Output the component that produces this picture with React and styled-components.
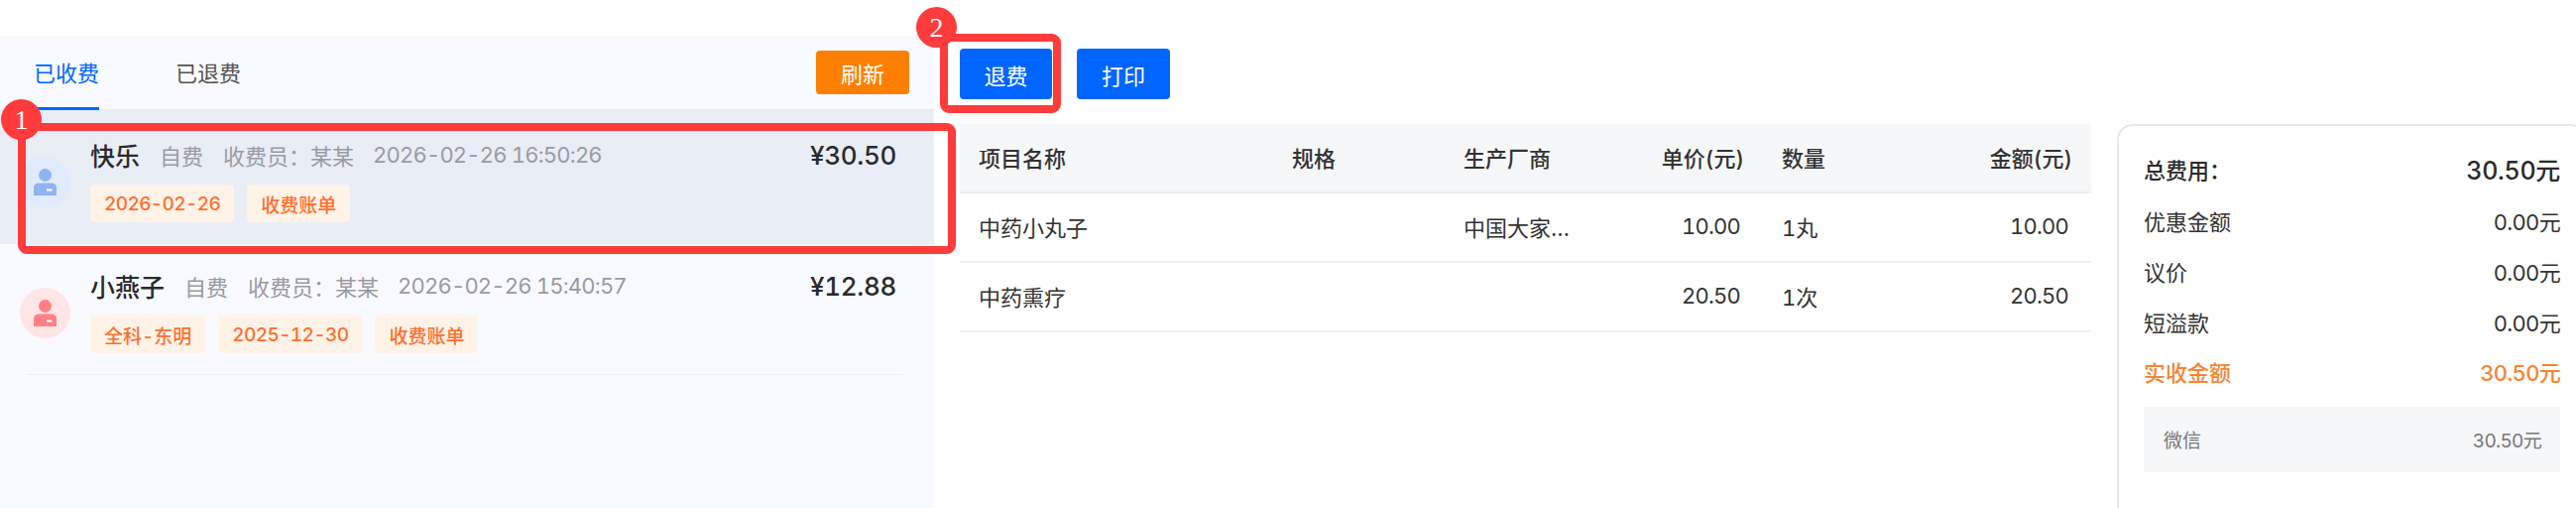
import styled, { createGlobalStyle } from 'styled-components';

const GlobalStyle = createGlobalStyle`
  html, body {
    margin: 0;
    padding: 0;
    background: #fff;
    font-family: Inter, "Noto Sans CJK SC", sans-serif;
    font-variant-numeric: tabular-nums;
    color: #333;
  }
`;

const Page = styled.div`
  position: relative;
  display: flex;
  width: 2598px;
  height: 512px;
  overflow: hidden;
`;

const LeftPanel = styled.section`
  flex: 0 0 942px;
  margin-top: 36px;
  background: #f9faff;
`;

const TabBar = styled.div`
  display: flex;
  align-items: stretch;
  height: 75px;
  padding-left: 34px;
  padding-right: 25px;
  gap: 77px;
  box-sizing: border-box;
  border-bottom: 1px solid #e8ebf2;
`;

const Tab = styled.div`
  display: flex;
  align-items: center;
  font-size: 22px;
  color: ${(p) => (p.$active ? '#0066ff' : '#555')};
  border-bottom: 3px solid ${(p) => (p.$active ? '#0066ff' : 'transparent')};
  margin-bottom: -1px;
`;

const Button = styled.button`
  border: none;
  border-radius: 4px;
  background: ${(p) => p.$bg || '#0066ff'};
  color: #fff;
  font-family: inherit;
  font-size: 22px;
  width: ${(p) => p.$w || 94}px;
  height: ${(p) => p.$h || 51}px;
  padding: 0;
`;

const RefreshButton = styled(Button)`
  margin-left: auto;
  align-self: center;
`;

const Row = styled.div`
  position: relative;
  display: flex;
  align-items: center;
  gap: 20px;
  padding: ${(p) => (p.$active ? 31 : 28)}px 38px 22px 20px;
  background: ${(p) => (p.$active ? '#e9edf5' : 'transparent')};

  &::after {
    content: '';
    position: absolute;
    left: 27px;
    right: 31px;
    bottom: 0;
    height: 1px;
    background: ${(p) => (p.$active ? 'transparent' : '#eef0f5')};
  }
`;

const Avatar = styled.div`
  flex: 0 0 51px;
  height: 51px;
  border-radius: 50%;
  display: flex;
  align-items: center;
  justify-content: center;
  background: ${(p) => p.$bg};
`;

const Info = styled.div`
  flex: 1;
  min-width: 0;
`;

const Head = styled.div`
  display: flex;
  align-items: center;
  height: 30px;
  box-sizing: border-box;
  padding-bottom: 2px;
  gap: 20px;
`;

const Name = styled.span`
  font-size: 25px;
  font-weight: 500;
  color: #2b2b2b;
`;

const Meta = styled.span`
  font-size: 22px;
  color: #999ba3;
  white-space: nowrap;
`;

const TimeText = styled(Meta)`
  margin-left: -1px;
  letter-spacing: -0.8px;
`;

const Price = styled.span`
  margin-left: auto;
  font-size: 26px;
  font-weight: 500;
  letter-spacing: -0.3px;
  color: #2b2b2b;
`;

const Tags = styled.div`
  display: flex;
  gap: 13px;
  margin-top: 14px;
`;

const Tag = styled.span`
  display: flex;
  align-items: center;
  height: 38px;
  padding: 0 14px;
  border-radius: 4px;
  background: #fff3e8;
  color: #ff6f2c;
  font-size: 19px;
  font-weight: 500;
  letter-spacing: ${(p) => (p.$date ? '-0.6px' : '0')};
`;

const Content = styled.div`
  flex: 1;
  min-width: 0;
  padding: 49px 0 0 26px;
`;

const Toolbar = styled.div`
  display: flex;
  gap: 25px;
`;

const Body = styled.div`
  display: flex;
  gap: 26px;
  margin-top: 25px;
`;

const Table = styled.div`
  flex: 0 0 1141px;
`;

const TableRow = styled.div`
  display: grid;
  grid-template-columns: 316px 173px 152px 169px 172px 159px;
  align-items: center;
  height: 68px;
  border-bottom: 2px solid #edf0f5;
  background: ${(p) => (p.$head ? '#f6f7f9' : 'transparent')};
  font-weight: ${(p) => (p.$head ? 500 : 400)};
`;

const Cell = styled.div`
  font-size: 22px;
  color: #333;
  box-sizing: border-box;
  padding: ${(p) => (p.$right ? '0 23px 2px 0' : '0 0 2px 19px')};
  text-align: ${(p) => (p.$right ? 'right' : 'left')};
  white-space: nowrap;
  overflow: hidden;
  text-overflow: ellipsis;
`;

const AmountCell = styled(Cell)`
  letter-spacing: -0.8px;
`;

const HeadCell = styled(Cell)`
  padding: ${(p) => (p.$right ? '0 19px 2px 0' : '0 0 2px 19px')};
`;

const MakerCell = styled(Cell)`
  padding-right: 24px;
`;

const SummaryCard = styled.aside`
  flex: 0 0 474px;
  height: 420px;
  padding: 23px 25px;
  box-sizing: border-box;
  border: 2px solid #e5e7ec;
  border-radius: 16px;
`;

const SummaryRow = styled.div`
  display: flex;
  justify-content: space-between;
  align-items: center;
  height: 50.7px;
  font-size: 22px;
  color: ${(p) => (p.$accent ? '#f58634' : '#333')};
  font-weight: ${(p) => (p.$accent ? 500 : 400)};
`;

const TotalRow = styled(SummaryRow)`
  height: 40px;
  margin-bottom: 7px;
  font-weight: 500;
  color: #2b2b2b;
`;

const TotalValue = styled.span`
  font-size: 25px;
  letter-spacing: -0.3px;
`;

const SummaryValue = styled.span`
  letter-spacing: -0.7px;
`;

const PayBox = styled.div`
  display: flex;
  justify-content: space-between;
  align-items: center;
  height: 66px;
  margin-top: 10px;
  padding: 0 19px 0 20px;
  background: #f6f7f9;
  font-size: 19px;
  color: #777;
`;

// red annotation frames and numbered badges drawn over the screenshot
const Frame = styled.div`
  position: absolute;
  left: ${(p) => p.$x}px;
  top: ${(p) => p.$y}px;
  width: ${(p) => p.$w}px;
  height: ${(p) => p.$h}px;
  box-sizing: border-box;
  border: 8px solid #ff3b3b;
  border-radius: 9px;
`;

const Badge = styled.div`
  position: absolute;
  left: ${(p) => p.$x}px;
  top: ${(p) => p.$y}px;
  width: 41px;
  height: 41px;
  border-radius: 50%;
  background: #ff3b3b;
  color: #fff;
  font-family: "Liberation Serif", serif;
  font-size: 28px;
  line-height: 41px;
  text-align: center;
`;

const PersonIcon = ({ color }) => (
  <svg width="23" height="27" viewBox="0 0 23 27">
    <circle cx="11.5" cy="6.5" r="6.5" fill={color} />
    <path d="M0 27V19C0 16 2.500 14.500 5 14.500H18C20.500 14.500 23 16 23 19V27Z" fill={color} />
    <rect x="13" y="20.500" width="5.500" height="2" fill="#fff" />
  </svg>
);

const patients = [
  {
    name: '快乐',
    time: '2026-02-26 16:50:26',
    price: '¥30.50',
    tags: ['2026-02-26', '收费账单'],
    icon: '#8fb4f0',
    iconBg: '#e0ebff',
    active: true,
  },
  {
    name: '小燕子',
    time: '2026-02-26 15:40:57',
    price: '¥12.88',
    tags: ['全科-东明', '2025-12-30', '收费账单'],
    icon: '#ff8085',
    iconBg: '#ffe5e6',
  },
];

const items = [
  { name: '中药小丸子', maker: '中国大家药业有限公司', unit: '10.00', qty: '1丸', total: '10.00' },
  { name: '中药熏疗', maker: '', unit: '20.50', qty: '1次', total: '20.50' },
];

const summary = [
  ['优惠金额', '0.00元'],
  ['议价', '0.00元'],
  ['短溢款', '0.00元'],
];

const App = () => (
  <Page>
    <GlobalStyle />
    <LeftPanel>
      <TabBar>
        <Tab $active>已收费</Tab>
        <Tab>已退费</Tab>
        <RefreshButton $bg="#ff8000" $h={44}>刷新</RefreshButton>
      </TabBar>
      {patients.map((p) => (
        <Row key={p.name} $active={p.active}>
          <Avatar $bg={p.iconBg}>
            <PersonIcon color={p.icon} />
          </Avatar>
          <Info>
            <Head>
              <Name>{p.name}</Name>
              <Meta>自费</Meta>
              <Meta>收费员：某某</Meta>
              <TimeText>{p.time}</TimeText>
              <Price>{p.price}</Price>
            </Head>
            <Tags>
              {p.tags.map((t) => (
                <Tag key={t} $date={/^\d/.test(t)}>{t}</Tag>
              ))}
            </Tags>
          </Info>
        </Row>
      ))}
    </LeftPanel>

    <Content>
      <Toolbar>
        <Button $w={93}>退费</Button>
        <Button>打印</Button>
      </Toolbar>
      <Body>
        <Table>
          <TableRow $head>
            <HeadCell>项目名称</HeadCell>
            <HeadCell>规格</HeadCell>
            <HeadCell>生产厂商</HeadCell>
            <HeadCell $right>单价(元)</HeadCell>
            <HeadCell>数量</HeadCell>
            <HeadCell $right>金额(元)</HeadCell>
          </TableRow>
          {items.map((it) => (
            <TableRow key={it.name}>
              <Cell>{it.name}</Cell>
              <Cell />
              <MakerCell>{it.maker}</MakerCell>
              <AmountCell $right>{it.unit}</AmountCell>
              <Cell>{it.qty}</Cell>
              <AmountCell $right>{it.total}</AmountCell>
            </TableRow>
          ))}
        </Table>
        <SummaryCard>
          <TotalRow>
            <span>总费用：</span>
            <TotalValue>30.50元</TotalValue>
          </TotalRow>
          {summary.map(([label, value]) => (
            <SummaryRow key={label}>
              <span>{label}</span>
              <SummaryValue>{value}</SummaryValue>
            </SummaryRow>
          ))}
          <SummaryRow $accent>
            <span>实收金额</span>
            <SummaryValue>30.50元</SummaryValue>
          </SummaryRow>
          <PayBox>
            <span>微信</span>
            <SummaryValue>30.50元</SummaryValue>
          </PayBox>
        </SummaryCard>
      </Body>
    </Content>

    <Frame $x={18} $y={124} $w={946} $h={132} />
    <Badge $x={1} $y={100}>1</Badge>
    <Frame $x={948} $y={34} $w={122} $h={80} />
    <Badge $x={924} $y={7}>2</Badge>
  </Page>
);

export default App;
